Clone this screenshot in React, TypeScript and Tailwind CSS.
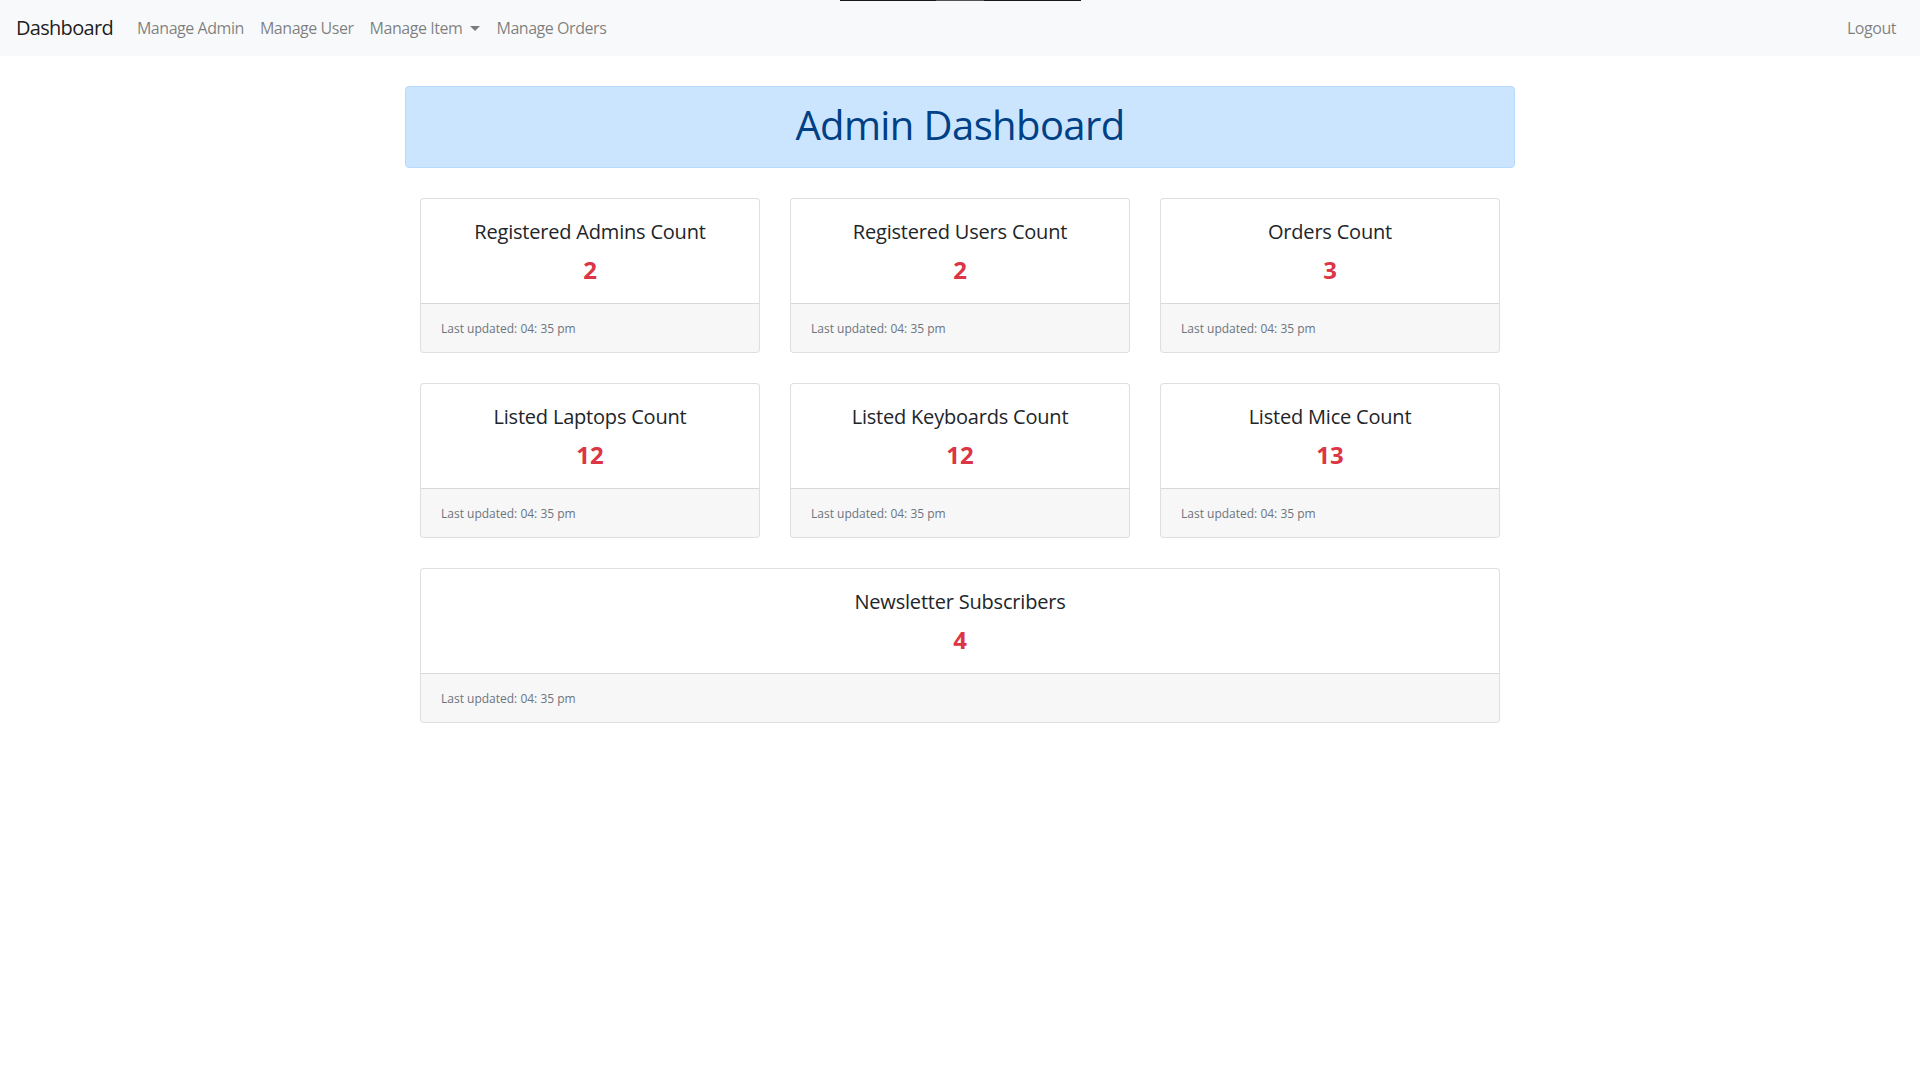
import React from "react";

const font = { fontFamily: '"Open Sans", "Noto Sans", "Liberation Sans", sans-serif' };

function StatCard({ title, value }: { title: string; value: string }) {
  return (
    <div className="flex flex-col rounded-[4px] border border-[rgba(0,0,0,0.125)] bg-white">
      <div className="flex flex-col items-center px-[20px] pt-[21px] pb-[19px]">
        <div className="mb-[11px] text-[20px] leading-[24px] font-medium tracking-[-0.2px] text-[#212529]">{title}</div>
        <div className="text-[24px] leading-[29px] font-bold text-[#dc3545]">{value}</div>
      </div>
      <div className="rounded-b-[3px] border-t border-[rgba(0,0,0,0.125)] bg-[rgba(0,0,0,0.03)] px-[20px] pt-[13px] pb-[11px] text-[12px] leading-[24px] text-[#6c757d]">
        Last updated: 04: 35 pm
      </div>
    </div>
  );
}

export default function App() {
  const cards = [
    { title: "Registered Admins Count", value: "2" },
    { title: "Registered Users Count", value: "2" },
    { title: "Orders Count", value: "3" },
    { title: "Listed Laptops Count", value: "12" },
    { title: "Listed Keyboards Count", value: "12" },
    { title: "Listed Mice Count", value: "13" },
  ];
  return (
    <div className="relative min-h-[1080px] bg-white text-[16px] text-[#212529]" style={font}>
      <div className="absolute left-[840px] top-0 flex h-[1px] w-[241px]">
        <div className="h-full w-[96px] bg-[#1a1a1a]" />
        <div className="h-full w-[48px] bg-[#555]" />
        <div className="h-full flex-1 bg-[#1a1a1a]" />
      </div>
      <nav className="flex h-[56px] items-center bg-[#f8f9fa] px-[16px]">
        <span className="mr-[16px] py-[5px] text-[20px] leading-[30px] tracking-[-0.7px] text-[rgba(0,0,0,0.9)]">Dashboard</span>
        <div className="flex items-center tracking-[-0.45px] text-[rgba(0,0,0,0.5)]">
          <span className="px-[8px] py-[8px] leading-[24px]">Manage Admin</span>
          <span className="px-[8px] py-[8px] leading-[24px]">Manage User</span>
          <span className="flex items-center px-[8px] py-[8px] leading-[24px]">
            Manage Item
            <span className="ml-[8px] inline-block h-0 w-0 border-x-[5px] border-t-[5px] border-x-transparent border-t-[rgba(0,0,0,0.5)]" />
          </span>
          <span className="px-[8px] py-[8px] leading-[24px]">Manage Orders</span>
        </div>
        <div className="ml-auto px-[8px] py-[8px] leading-[24px] tracking-[-0.45px] text-[rgba(0,0,0,0.5)]">Logout</div>
      </nav>

      <div className="mx-auto w-[1140px] px-[15px] pt-[30px]">
        <div className="rounded-[4px] border border-[#b8daff] bg-[#cce5ff] pt-[14px] pb-[18px] text-center text-[40px] leading-[48px] font-medium tracking-[-0.6px] text-[#004085]">
          Admin Dashboard
        </div>
        <div className="px-[15px] pt-[30px]">
          <div className="grid grid-cols-3 gap-x-[30px] gap-y-[30px]">
            {cards.map((c) => (
              <StatCard key={c.title} title={c.title} value={c.value} />
            ))}
            <div className="col-span-3">
              <StatCard title="Newsletter Subscribers" value="4" />
            </div>
          </div>
        </div>
      </div>
    </div>
  );
}
